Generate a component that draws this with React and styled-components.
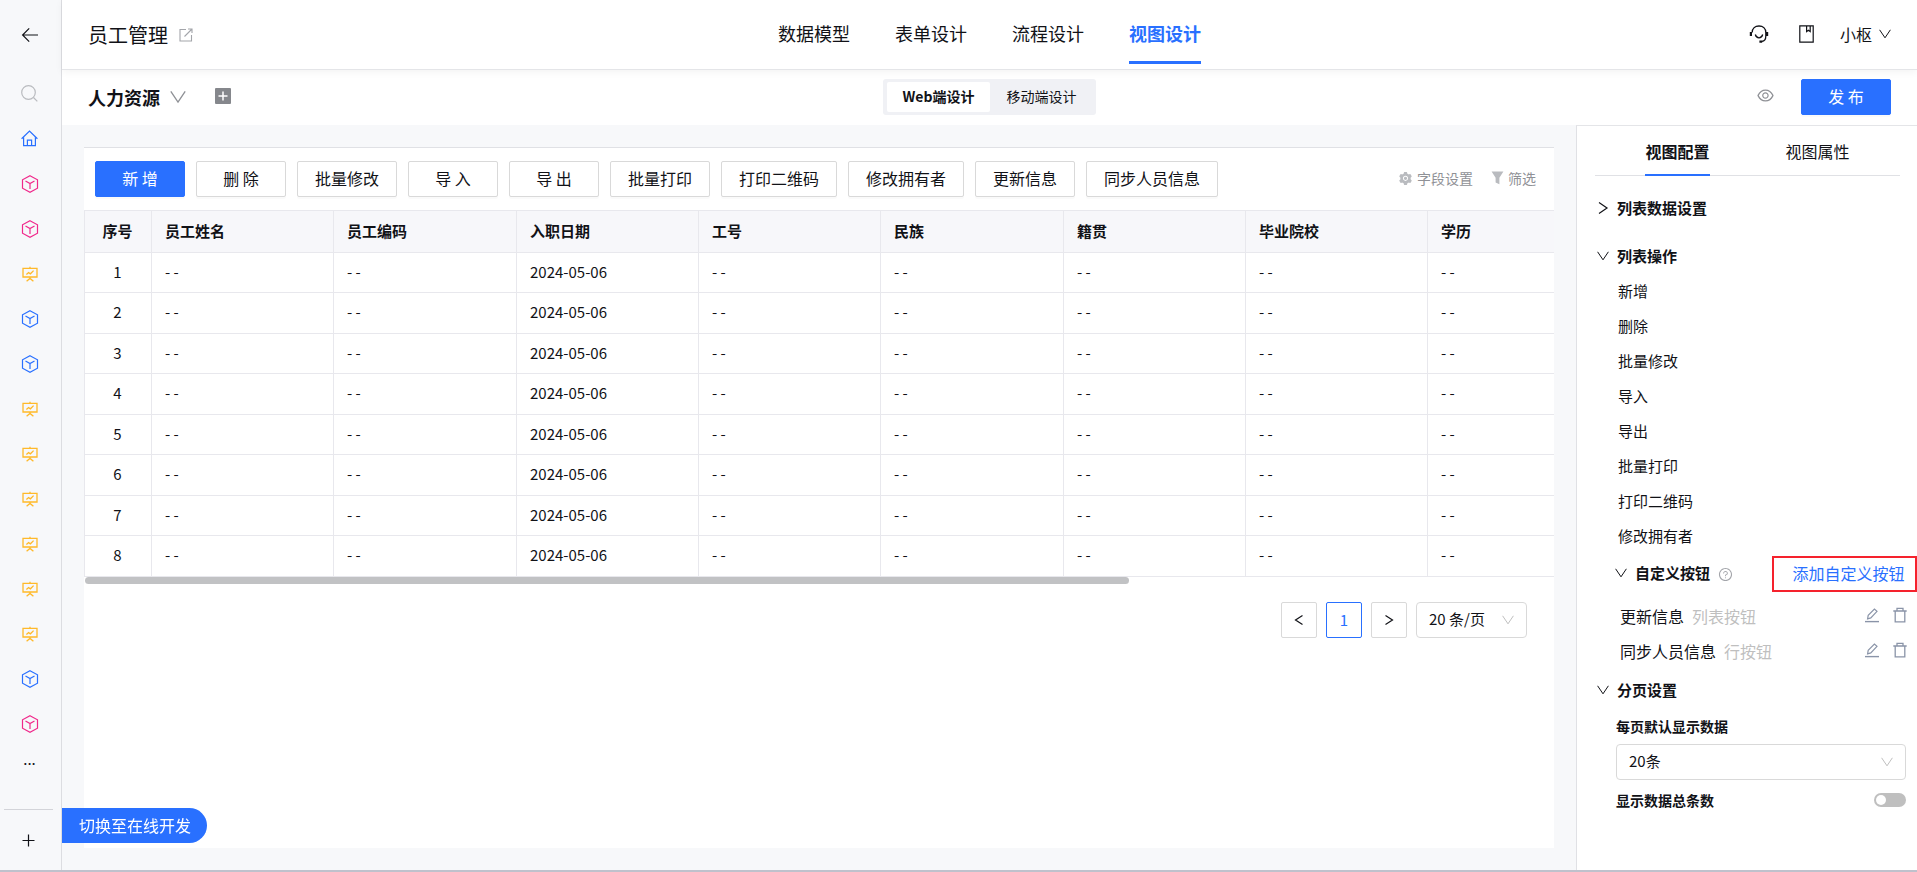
import React, { useState } from 'react';
import styled, { createGlobalStyle } from 'styled-components';
import { AiOutlineEye, AiOutlineQuestionCircle, AiFillSetting } from 'react-icons/ai';

const BLUE = '#2970ff';
const PINK = '#f0288a';
const YELLOW = '#ffb929';

const GlobalStyle = createGlobalStyle`
  * {
    box-sizing: border-box;
  }

  body {
    margin: 0;
    background: #f7f8fa;
    color: #111217;
    font-family: 'Noto Sans CJK SC', 'Noto Sans', sans-serif;
    font-size: 15px;
    line-height: 20px;
  }

  button,
  select,
  input {
    font: inherit;
    color: inherit;
    margin: 0;
  }

  button {
    padding: 0 0 2px;
    border: none;
    background: none;
    cursor: pointer;
  }

  svg {
    display: block;
    flex-shrink: 0;
  }
`;

const Layout = styled.div`
  display: flex;
  min-height: 100vh;
  border-bottom: 2px solid #bfc1cc;
`;

/* ---------- sidebar ---------- */

const Sidebar = styled.nav`
  flex: 0 0 62px;
  display: flex;
  flex-direction: column;
  align-items: center;
  padding: 13px 2px 6px 0;
  background: #f7f8fa;
  border-right: 1px solid #dcdde1;
`;

const SideButton = styled.button`
  display: flex;
  align-items: center;
  justify-content: center;
  width: 45px;
  height: 45px;
  color: ${(p) => p.$color || '#111217'};
`;

const SearchButton = styled(SideButton)`
  margin-top: 14px;
`;

const MoreButton = styled(SideButton)`
  height: 26px;
`;

const SideFooter = styled.div`
  width: 49px;
  margin: auto 2px 0 0;
  display: flex;
  justify-content: center;
  padding-top: 9px;
  border-top: 1px solid #d3d4d9;
`;

/* ---------- header ---------- */

const Main = styled.div`
  flex: 1;
  min-width: 0;
  display: flex;
  flex-direction: column;
`;

const TopBar = styled.header`
  position: relative;
  z-index: 1;
  display: grid;
  grid-template-columns: 1fr auto 1fr;
  height: 70px;
  padding: 0 26px;
  background: #fff;
  border-bottom: 1px solid #e4e5e8;
  box-shadow: 0 2px 8px rgba(0, 0, 0, 0.05);
`;

const AppTitle = styled.h1`
  display: flex;
  align-items: center;
  gap: 11px;
  margin: 0;
  font-size: 20px;
  font-weight: 400;

  svg {
    color: #a3a5aa;
  }
`;

const TopTabs = styled.div`
  display: flex;
  gap: 45px;
  padding-top: 8px;
`;

const TopTab = styled.button`
  height: 56px;
  padding-bottom: 3px;
  font-size: 18px;
  font-weight: ${(p) => (p.$active ? 700 : 400)};
  color: ${(p) => (p.$active ? BLUE : 'inherit')};
  border-bottom: 3px solid ${(p) => (p.$active ? BLUE : 'transparent')};
`;

const TopActions = styled.div`
  display: flex;
  align-items: center;
  justify-content: flex-end;
  gap: 26px;
`;

const TopIcons = styled.div`
  display: flex;
  gap: 30px;
`;

const UserButton = styled.button`
  display: flex;
  align-items: center;
  gap: 7px;
  font-size: 16px;
`;

const SubBar = styled.div`
  display: grid;
  grid-template-columns: 1fr auto 1fr;
  align-items: center;
  height: 55px;
  padding: 0 26px 2px;
  background: #fff;
`;

const ViewPicker = styled.div`
  display: flex;
  align-items: center;
`;

const ViewName = styled.button`
  display: flex;
  align-items: center;
  gap: 10px;
  margin-right: 29px;
  padding: 0;
  font-size: 18px;
  font-weight: 700;

  svg {
    color: #8f9196;
  }
`;

const Segment = styled.div`
  display: flex;
  padding: 3px 4px;
  background: #f0f1f5;
  border-radius: 3px;
`;

const SegmentItem = styled.button`
  height: 30px;
  padding: 0 16px 2px;
  font-size: 14px;
  font-weight: ${(p) => (p.$active ? 700 : 400)};
  background: ${(p) => (p.$active ? '#fff' : 'transparent')};
  border-radius: 2px;
`;

const SubActions = styled.div`
  display: flex;
  align-items: center;
  justify-content: flex-end;
  gap: 26px;
`;

const IconButton = styled.button`
  display: flex;
  align-items: center;
  font-size: 19px;
  color: ${(p) => p.$color || '#111217'};
`;

/* ---------- list preview ---------- */

const Body = styled.div`
  flex: 1;
  display: flex;
  min-height: 0;
`;

const Canvas = styled.main`
  flex: 1;
  min-width: 0;
  display: flex;
  padding: 22px;
`;

const Card = styled.section`
  flex: 1;
  min-width: 0;
  background: #fff;
  border-top: 1px solid #e0e1e5;
`;

const Toolbar = styled.div`
  display: flex;
  align-items: center;
  gap: 11px;
  padding: 13px 18px 13px 11px;
`;

const Button = styled.button`
  min-width: 90px;
  height: 36px;
  padding: 0 17px 2px;
  font-size: 16px;
  white-space: nowrap;
  color: ${(p) => (p.$primary ? '#fff' : 'inherit')};
  background: ${(p) => (p.$primary ? BLUE : '#fff')};
  border: 1px solid ${(p) => (p.$primary ? BLUE : '#d9d9d9')};
  border-radius: 2px;
  box-shadow: 0 2px 0 rgba(0, 0, 0, 0.02);
`;

const ToolLinks = styled.div`
  display: flex;
  gap: 18px;
  margin-left: auto;
`;

const ToolLink = styled.button`
  display: flex;
  align-items: center;
  gap: 4px;
  font-size: 14px;
  color: #8f9196;
  white-space: nowrap;

  svg {
    color: #b9bbbf;
  }
`;

const TableWrap = styled.div`
  overflow: hidden;
`;

const Table = styled.table`
  width: 2073px;
  table-layout: fixed;
  border-collapse: separate;
  border-spacing: 0;
  border-top: 1px solid #e8e8ed;
  border-left: 1px solid #e8e8ed;

  col {
    width: 182px;
  }

  col:nth-child(3n) {
    width: 183px;
  }

  col:first-child {
    width: 67px;
  }

  col:last-child {
    width: auto;
  }

  th,
  td {
    padding: 0 14px 2px 13px;
    text-align: left;
    border-right: 1px solid #e8e8ed;
    border-bottom: 1px solid #e8e8ed;
  }

  th {
    height: 42px;
    font-weight: 700;
    background: #f7f7fa;
  }

  td {
    height: 40px;
  }

  tr:nth-child(even) td {
    height: 41px;
  }

  th:first-child,
  td:first-child {
    text-align: center;
  }
`;

const ScrollThumb = styled.div`
  width: 71%;
  height: 7px;
  margin-left: 1px;
  background: #c1c2c4;
  border-radius: 4px;
`;

const Pager = styled.div`
  display: flex;
  justify-content: flex-end;
  gap: 9px;
  padding: 18px 27px 0 0;
`;

const PageButton = styled.button`
  display: flex;
  align-items: center;
  justify-content: center;
  width: 36px;
  height: 36px;
  padding: 0;
  color: ${(p) => (p.$active ? BLUE : 'inherit')};
  background: #fff;
  border: 1px solid ${(p) => (p.$active ? BLUE : '#d9d9d9')};
  border-radius: 2px;
`;

const SelectBox = styled.div`
  display: grid;
  align-items: center;

  select,
  svg {
    grid-area: 1 / 1;
  }

  select {
    appearance: none;
    width: 100%;
    min-width: 111px;
    height: 36px;
    padding: 0 32px 2px 12px;
    background: #fff;
    border: 1px solid #d9d9d9;
    border-radius: 4px;
  }

  svg {
    justify-self: end;
    margin-right: 13px;
    color: #bfbfbf;
    pointer-events: none;
  }
`;

const SwitchDev = styled.button`
  position: fixed;
  left: 62px;
  bottom: 29px;
  height: 35px;
  padding: 0 16px 2px 17px;
  font-size: 16px;
  color: #fff;
  background: ${BLUE};
  border-radius: 0 18px 18px 0;
`;

/* ---------- settings panel ---------- */

const Panel = styled.aside`
  flex: 0 0 341px;
  background: #fff;
  border-top: 1px solid #e4e5e8;
  border-left: 1px solid #e0e1e5;
`;

const PanelTabs = styled.div`
  display: flex;
  justify-content: center;
  gap: 76px;
  height: 50px;
  margin: 0 17px 0 18px;
  box-shadow: inset 0 -1px 0 #e0e1e5;
`;

const PanelTab = styled.button`
  height: 50px;
  padding-top: 4px;
  font-size: 16px;
  font-weight: ${(p) => (p.$active ? 700 : 400)};
  border-bottom: 2px solid ${(p) => (p.$active ? BLUE : 'transparent')};
`;

const Group = styled.section`
  padding-left: 20px;
`;

const DataGroup = styled(Group)`
  padding-top: 16px;
  padding-bottom: 14px;
`;

const PagingGroup = styled(Group)`
  padding-top: 6px;
`;

const GroupTitle = styled.button`
  display: flex;
  align-items: center;
  gap: 8px;
  height: 34px;
  font-weight: 700;
`;

const OptionList = styled.ul`
  margin: 0;
  padding: 0 0 2px 21px;
  list-style: none;
`;

const Option = styled.li`
  height: 35px;
  line-height: 33px;
`;

const SubGroup = styled.div`
  padding-left: 18px;
`;

const SubGroupHead = styled.div`
  display: flex;
  align-items: center;
  height: 36px;
  margin-bottom: 6px;
  gap: 8px;
`;

const AddButton = styled.button`
  width: 145px;
  height: 36px;
  margin-left: auto;
  padding-left: 8px;
  font-size: 16px;
  color: ${BLUE};
  border: 2px solid #f5222d;
`;

const CustomRow = styled.div`
  display: flex;
  align-items: center;
  height: 35px;
  padding: 0 10px 0 5px;
  font-size: 16px;
`;

const Kind = styled.span`
  margin-left: 8px;
  color: #bfbfbf;
`;

const RowActions = styled.div`
  display: flex;
  gap: 13px;
  margin-left: auto;
`;

const PagingForm = styled.div`
  padding: 8px 11px 0 19px;
  font-size: 14px;
  font-weight: 700;

  label {
    display: block;
    padding-bottom: 8px;
  }

  select {
    font-size: 15px;
    font-weight: 400;
  }
`;

const SwitchRow = styled.div`
  display: flex;
  align-items: flex-start;
  justify-content: space-between;
  padding-top: 10px;
`;

const Toggle = styled.input`
  appearance: none;
  width: 32px;
  height: 14px;
  padding: 2px;
  background: #bfbfbf;
  border-radius: 7px;
  cursor: pointer;

  && {
    margin-top: 3px;
  }

  &::before {
    content: '';
    display: block;
    width: 10px;
    height: 10px;
    background: #fff;
    border-radius: 5px;
  }

  &:checked {
    background: ${BLUE};
  }

  &:checked::before {
    margin-left: auto;
  }
`;

/* ---------- icons ---------- */

const DownIcon = ({ size = 12 }) => (
  <svg width={size} height={size} viewBox="0 0 12 12" fill="none" stroke="currentColor">
    <path d="M0.6 1.8 6 9.8 11.4 1.8" />
  </svg>
);

const RightIcon = () => (
  <svg width="12" height="12" viewBox="0 0 12 12" fill="none" stroke="currentColor" strokeWidth="1.2">
    <path d="M2 0.6 10 6 2 11.4" />
  </svg>
);

const PageArrow = ({ back }) => (
  <svg width="10" height="12" viewBox="0 0 10 12" fill="none" stroke="currentColor" strokeWidth="1.2">
    <path d={back ? 'M8.5 1.5 1.5 6 8.5 10.5' : 'M1.5 1.5 8.5 6 1.5 10.5'} />
  </svg>
);

const BackIcon = () => (
  <svg width="18" height="16" viewBox="0 0 18 16" fill="none" stroke="currentColor" strokeWidth="1.2">
    <path d="M17 8H1.6M8.2 1.4 1.6 8 8.2 14.6" />
  </svg>
);

const SearchIcon = () => (
  <svg width="17" height="17" viewBox="0 0 17 17" fill="none" stroke="currentColor" strokeWidth="1.2">
    <circle cx="7.5" cy="7.5" r="6.8" />
    <path d="M12.5 12.5 16.3 16.3" />
  </svg>
);

const HomeIcon = () => (
  <svg width="17" height="17" viewBox="0 0 17 17" fill="none" stroke="currentColor" strokeWidth="1.2">
    <path d="M0.6 8.8 8.5 1 16.4 8.8" />
    <path d="M2.6 7.2V15.6H14.4V7.2" />
    <path d="M6.4 15.4V10.2H10.6V15.4" />
  </svg>
);

const CubeIcon = () => (
  <svg width="18" height="18" viewBox="0 0 18 18" fill="none" stroke="currentColor" strokeWidth="1.2">
    <path d="M9 0.8 16.5 4.8V13.2L9 17.2 1.5 13.2V4.8Z" />
    <path d="M4.5 6 9 8.6 13.5 6M9 8.6V14" />
  </svg>
);

const ChartIcon = () => (
  <svg width="16" height="16" viewBox="0 0 16 16" fill="none" stroke="currentColor" strokeWidth="1.3">
    <path d="M1 2.4H15V11H1Z" />
    <path d="M8 0.8V2.4M8 11V12.4M4.6 15.2 8 12.4 11.4 15.2" />
    <path d="M4.4 8.6 6.6 6.6 8.4 7.8 11.6 4.6" />
  </svg>
);

const PlusIcon = () => (
  <svg width="13" height="13" viewBox="0 0 13 13" fill="none" stroke="currentColor" strokeWidth="1.2">
    <path d="M6.5 0.5V12.5M0.5 6.5H12.5" />
  </svg>
);

const FilterIcon = () => (
  <svg width="13" height="14" viewBox="0 0 13 14" fill="currentColor">
    <path d="M0.6 0.6H12.4L8.4 6.8V13.2L4.6 11.4V6.8Z" />
  </svg>
);

const ShareIcon = () => (
  <svg width="14" height="14" viewBox="0 0 14 14" fill="none" stroke="currentColor" strokeWidth="1.1">
    <path d="M7 1.5H1V13H12.5V7" />
    <path d="M5.5 8.5 12.5 1.5M9 1H13V5" />
  </svg>
);

const PlusSquareIcon = () => (
  <svg width="16" height="16" viewBox="0 0 16 16">
    <rect width="16" height="16" rx="1" fill="#85878c" />
    <path d="M8 3.5V12.5M3.5 8H12.5" stroke="#fff" strokeWidth="1.5" />
  </svg>
);

const HeadsetIcon = () => (
  <svg width="20" height="18" viewBox="0 0 20 18" fill="none" stroke="currentColor" strokeWidth="1.3">
    <path d="M3.2 7.5C3.2 3.6 6 1 10 1S16.8 3.6 16.8 7.5V11C16.8 14.5 15.4 16.2 13 16.4" />
    <path d="M6.3 9.5C7 12 8.4 12.8 10 12.8S13 12 13.7 9.5" />
    <path d="M1.9 7V11M18.1 7V11M10.4 16.6H13.2" strokeWidth="2.2" />
  </svg>
);

const BookIcon = () => (
  <svg width="15" height="18" viewBox="0 0 15 18" fill="none" stroke="currentColor" strokeWidth="1.2">
    <path d="M0.8 0.8H14.2V17.2H0.8Z" />
    <path d="M7.6 1V6.6L9.4 5.2 11.2 6.6V1" />
  </svg>
);

const EditIcon = () => (
  <svg width="16" height="16" viewBox="0 0 16 16" fill="none" stroke="currentColor" strokeWidth="1.2">
    <path d="M3.6 11.8 4.2 8.4 10.4 2 13 4.4 6.8 10.9Z" />
    <path d="M1 14.6H15" strokeWidth="1.4" />
  </svg>
);

const TrashIcon = () => (
  <svg width="14" height="16" viewBox="0 0 14 16" fill="none" stroke="currentColor" strokeWidth="1.3">
    <path d="M0.3 4H13.7M4 3.8V1.4H10V3.8M2.2 4V14.8H11.8V4" />
  </svg>
);

/* ---------- data ---------- */

const sideItems = [
  { kind: 'cube', color: PINK },
  { kind: 'cube', color: PINK },
  { kind: 'chart', color: YELLOW },
  { kind: 'cube', color: BLUE },
  { kind: 'cube', color: BLUE },
  { kind: 'chart', color: YELLOW },
  { kind: 'chart', color: YELLOW },
  { kind: 'chart', color: YELLOW },
  { kind: 'chart', color: YELLOW },
  { kind: 'chart', color: YELLOW },
  { kind: 'chart', color: YELLOW },
  { kind: 'cube', color: BLUE },
  { kind: 'cube', color: PINK },
];

const topTabs = ['数据模型', '表单设计', '流程设计', '视图设计'];

const toolbarButtons = [
  '删 除',
  '批量修改',
  '导 入',
  '导 出',
  '批量打印',
  '打印二维码',
  '修改拥有者',
  '更新信息',
  '同步人员信息',
];

const columns = ['员工姓名', '员工编码', '入职日期', '工号', '民族', '籍贯', '毕业院校', '学历'];

const rows = [1, 2, 3, 4, 5, 6, 7, 8];

const listOptions = ['新增', '删除', '批量修改', '导入', '导出', '批量打印', '打印二维码', '修改拥有者'];

const customButtons = [
  { name: '更新信息', kind: '列表按钮' },
  { name: '同步人员信息', kind: '行按钮' },
];

/* ---------- page ---------- */

const SideNav = () => (
  <Sidebar>
    <SideButton aria-label="返回">
      <BackIcon />
    </SideButton>
    <SearchButton $color="#b9bbbf" aria-label="搜索">
      <SearchIcon />
    </SearchButton>
    <SideButton $color={BLUE} aria-label="首页">
      <HomeIcon />
    </SideButton>
    {sideItems.map((item, i) => (
      <SideButton key={i} $color={item.color} aria-label="应用">
        {item.kind === 'cube' ? <CubeIcon /> : <ChartIcon />}
      </SideButton>
    ))}
    <MoreButton>...</MoreButton>
    <SideFooter>
      <SideButton aria-label="添加">
        <PlusIcon />
      </SideButton>
    </SideFooter>
  </Sidebar>
);

const ListPreview = () => (
  <Card>
    <Toolbar>
      <Button $primary>新 增</Button>
      {toolbarButtons.map((label) => (
        <Button key={label}>{label}</Button>
      ))}
      <ToolLinks>
        <ToolLink>
          <AiFillSetting size={15} />
          字段设置
        </ToolLink>
        <ToolLink>
          <FilterIcon />
          筛选
        </ToolLink>
      </ToolLinks>
    </Toolbar>
    <TableWrap>
      <Table>
        <colgroup>
          <col />
          {columns.map((name) => (
            <col key={name} />
          ))}
        </colgroup>
        <thead>
          <tr>
            <th>序号</th>
            {columns.map((name) => (
              <th key={name}>{name}</th>
            ))}
          </tr>
        </thead>
        <tbody>
          {rows.map((n) => (
            <tr key={n}>
              <td>{n}</td>
              {columns.map((name) => (
                <td key={name}>{name === '入职日期' ? '2024-05-06' : '- -'}</td>
              ))}
            </tr>
          ))}
        </tbody>
      </Table>
      <ScrollThumb />
    </TableWrap>
    <Pager>
      <PageButton aria-label="上一页">
        <PageArrow back />
      </PageButton>
      <PageButton $active>1</PageButton>
      <PageButton aria-label="下一页">
        <PageArrow />
      </PageButton>
      <SelectBox>
        <select aria-label="每页条数">
          <option>20 条/页</option>
        </select>
        <DownIcon />
      </SelectBox>
    </Pager>
  </Card>
);

const SettingsPanel = () => {
  const [showTotal, setShowTotal] = useState(false);

  return (
    <Panel>
      <PanelTabs>
        <PanelTab $active>视图配置</PanelTab>
        <PanelTab>视图属性</PanelTab>
      </PanelTabs>
      <DataGroup>
        <GroupTitle>
          <RightIcon />
          列表数据设置
        </GroupTitle>
      </DataGroup>
      <Group>
        <GroupTitle>
          <DownIcon />
          列表操作
        </GroupTitle>
        <OptionList>
          {listOptions.map((label) => (
            <Option key={label}>{label}</Option>
          ))}
        </OptionList>
        <SubGroup>
          <SubGroupHead>
            <GroupTitle>
              <DownIcon />
              自定义按钮
            </GroupTitle>
            <AiOutlineQuestionCircle size={15} color="#a3a5aa" />
            <AddButton>添加自定义按钮</AddButton>
          </SubGroupHead>
          {customButtons.map((item) => (
            <CustomRow key={item.name}>
              {item.name}
              <Kind>{item.kind}</Kind>
              <RowActions>
                <IconButton $color="#8a94a8" aria-label="编辑">
                  <EditIcon />
                </IconButton>
                <IconButton $color="#8a94a8" aria-label="删除">
                  <TrashIcon />
                </IconButton>
              </RowActions>
            </CustomRow>
          ))}
        </SubGroup>
      </Group>
      <PagingGroup>
        <GroupTitle>
          <DownIcon />
          分页设置
        </GroupTitle>
        <PagingForm>
          <label htmlFor="page-size">每页默认显示数据</label>
          <SelectBox>
            <select id="page-size">
              <option>20条</option>
            </select>
            <DownIcon />
          </SelectBox>
          <SwitchRow>
            <label htmlFor="show-total">显示数据总条数</label>
            <Toggle
              id="show-total"
              type="checkbox"
              role="switch"
              checked={showTotal}
              onChange={(e) => setShowTotal(e.target.checked)}
            />
          </SwitchRow>
        </PagingForm>
      </PagingGroup>
    </Panel>
  );
};

const App = () => {
  const [tab, setTab] = useState('视图设计');

  return (
    <>
      <GlobalStyle />
      <Layout>
        <SideNav />
        <Main>
          <TopBar>
            <AppTitle>
              员工管理
              <ShareIcon />
            </AppTitle>
            <TopTabs>
              {topTabs.map((name) => (
                <TopTab key={name} $active={name === tab} onClick={() => setTab(name)}>
                  {name}
                </TopTab>
              ))}
            </TopTabs>
            <TopActions>
              <TopIcons>
                <IconButton aria-label="客服">
                  <HeadsetIcon />
                </IconButton>
                <IconButton aria-label="手册">
                  <BookIcon />
                </IconButton>
              </TopIcons>
              <UserButton>
                小枢
                <DownIcon />
              </UserButton>
            </TopActions>
          </TopBar>
          <SubBar>
            <ViewPicker>
              <ViewName>
                人力资源
                <DownIcon size={16} />
              </ViewName>
              <IconButton aria-label="新建视图">
                <PlusSquareIcon />
              </IconButton>
            </ViewPicker>
            <Segment>
              <SegmentItem $active>Web端设计</SegmentItem>
              <SegmentItem>移动端设计</SegmentItem>
            </Segment>
            <SubActions>
              <IconButton $color="#8f9196" aria-label="预览">
                <AiOutlineEye />
              </IconButton>
              <Button $primary>发 布</Button>
            </SubActions>
          </SubBar>
          <Body>
            <Canvas>
              <ListPreview />
            </Canvas>
            <SettingsPanel />
          </Body>
        </Main>
      </Layout>
      <SwitchDev>切换至在线开发</SwitchDev>
    </>
  );
};

export default App;
